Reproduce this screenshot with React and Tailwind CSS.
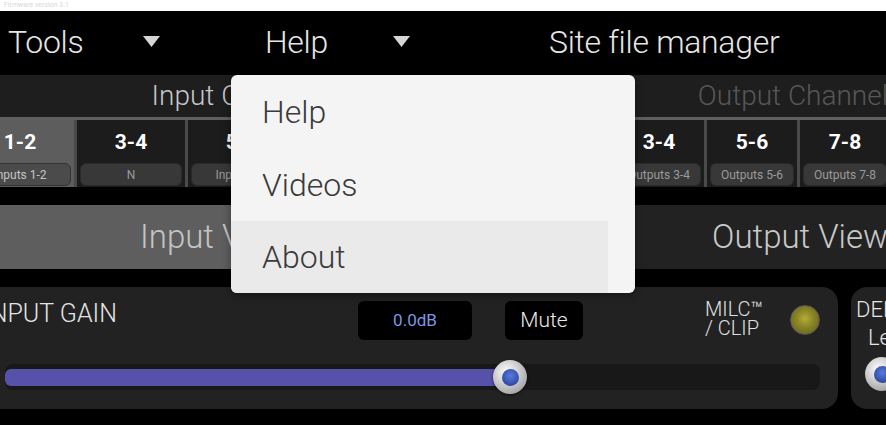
import React from 'react';

const font = { fontFamily: 'Roboto, "Liberation Sans", sans-serif' };

const Caret = () => (
  <svg width="17" height="11" viewBox="0 0 17 11" className="shrink-0">
    <polygon points="0,0 17,0 8.5,11" fill="#d6d6d6" />
  </svg>
);

const inputTabs = [
  { id: '1-2', sub: 'Inputs 1-2', active: true },
  { id: '3-4', sub: 'N' },
  { id: '5-6', sub: 'Inputs 5-6' },
  { id: '7-8', sub: 'Inputs 7-8' },
  { id: '9-10', sub: 'Inputs 9-10' },
];

const outputTabs = [
  { id: '1-2', sub: 'Outputs 1-2' },
  { id: '3-4', sub: 'Outputs 3-4' },
  { id: '5-6', sub: 'Outputs 5-6' },
  { id: '7-8', sub: 'Outputs 7-8' },
  { id: '9-10', sub: 'Outputs 9-10' },
  { id: '11-12', sub: 'Outputs 11-12' },
];

const Tab = ({ tab, width }) => (
  <div
    className={`flex flex-col items-center shrink-0 border-r-[3px] border-[#4a4a4a] px-[3px] pt-[9px] ${
      tab.active ? 'bg-[#5d5d5d]' : 'bg-[#1c1c1c]'
    } ${width}`}
  >
    <span className="text-[21px] leading-[26px] font-bold text-white">{tab.id}</span>
    <span
      className={`mt-[8px] w-full h-[23px] rounded-md border flex items-center justify-center text-[12px] whitespace-nowrap overflow-hidden ${
        tab.active ? 'bg-[#4b4b4b] border-[#333] text-[#c4c4c4]' : 'bg-[#383838] border-[#2a2a2a] text-[#9a9a9a]'
      }`}
    >
      {tab.sub}
    </span>
  </div>
);

export default function App() {
  return (
    <div className="relative w-[886px] h-[425px] overflow-hidden bg-black" style={font}>
      {/* top strip */}
      <div className="h-[11px] bg-white text-[7px] leading-[11px] text-[#d8d8d8] pl-1">
        Firmware version 3.1
      </div>

      {/* nav bar */}
      <div className="h-[64px] flex items-center text-[32px] font-light text-[#e6e6e6] tracking-[-0.3px] pb-[3px]">
        <div className="w-[257px] pl-[8px] flex items-center">
          <span className="w-[135px]">Tools</span>
          <Caret />
        </div>
        <div className="w-[292px] pl-[8px] flex items-center">
          <span className="w-[128px]">Help</span>
          <Caret />
        </div>
        <span>Site file manager</span>
      </div>

      {/* channel selector */}
      <div className="flex ml-[-34px] w-[1200px]">
        <div className="flex flex-col">
          <div className="h-[45px] bg-[#1e1e1e] flex items-center justify-center text-[28px] font-light text-[#c8c8c8] border-b-[3px] border-[#5f5f5f]">
            Input Channels
          </div>
          <div className="flex h-[67px]">
            {inputTabs.map((t) => (
              <Tab key={t.id} tab={t} width="w-[111px]" />
            ))}
          </div>
        </div>
        <div className="flex flex-col">
          <div className="h-[45px] bg-[#1e1e1e] flex items-center justify-center text-[28px] font-light text-[#575757] border-b-[3px] border-[#5f5f5f]">
            Output Channels
          </div>
          <div className="flex h-[67px]">
            {outputTabs.map((t) => (
              <Tab key={t.id} tab={t} width="w-[93px]" />
            ))}
          </div>
        </div>
      </div>

      {/* view toggle */}
      <div className="flex gap-[4px] ml-[-34px] mt-[18px] h-[64px] w-[1200px]">
        <div className="w-[551px] bg-[#5e5e5e] flex items-center pl-[174px] text-[33px] font-light text-[#c4c4c4]">
          Input View
        </div>
        <div className="w-[558px] bg-[#222] flex items-center justify-center text-[33px] font-light text-[#c8c8c8]">
          Output View
        </div>
      </div>

      {/* gain panels */}
      <div className="flex gap-[13px] ml-[-34px] mt-[18px] w-[1200px]">
        <div className="w-[872px] h-[122px] rounded-[16px] bg-[#222] pl-[17px] pr-[18px] pt-[14px]">
          <div className="flex items-start h-[39px]">
            <span className="w-[375px] text-[25px] leading-[26px] font-light text-[#e4e4e4]">INPUT GAIN</span>
            <div className="w-[114px] h-[39px] rounded-md bg-black flex items-center justify-center text-[17px] text-[#7b98e0]">
              0.0dB
            </div>
            <div className="ml-[33px] w-[78px] h-[39px] rounded-md bg-black flex items-center justify-center text-[21px] font-light text-[#eaeaea]">
              Mute
            </div>
            <div className="ml-[122px] w-[72px] text-[20px] leading-[19px] font-light text-[#e0e0e0] -mt-[1px]">
              MILC™
              <br />/ CLIP
            </div>
            <div className="ml-[13px] mt-[4px] w-[30px] h-[30px] rounded-full border border-[#555] bg-[radial-gradient(circle_at_50%_45%,#b5ad35_0%,#8c8626_40%,#5c5a1c_100%)]" />
          </div>
          <div className="relative ml-[22px] mt-[24px] h-[26px] rounded-lg bg-[#181818]">
            <div className="absolute left-0 top-[5px] h-[17px] w-[505px] rounded-l-md bg-[#5651a9]" />
            <div className="absolute left-[488px] top-[-4px] w-[34px] h-[34px] rounded-full bg-[radial-gradient(circle_at_40%_35%,#ffffff_0%,#c9c9c9_45%,#8a8a8a_100%)] flex items-center justify-center shadow-[0_1px_3px_rgba(0,0,0,0.6)]">
              <div className="w-[17px] h-[17px] rounded-full bg-[radial-gradient(circle_at_50%_40%,#5a7ad8_0%,#3553b3_60%,#24367a_100%)]" />
            </div>
          </div>
        </div>
        <div className="w-[200px] h-[122px] rounded-[16px] bg-[#222] pl-[5px] pt-[10px] text-[22px] leading-[26px] font-light text-[#e4e4e4]">
          <div>DELAY</div>
          <div className="pl-[12px] mt-[2px]">Level</div>
          <div className="ml-[9px] mt-[6px] w-[34px] h-[34px] rounded-full bg-[radial-gradient(circle_at_40%_35%,#ffffff_0%,#c9c9c9_45%,#8a8a8a_100%)] flex items-center justify-center">
            <div className="w-[17px] h-[17px] rounded-full bg-[radial-gradient(circle_at_50%_40%,#5a7ad8_0%,#3553b3_60%,#24367a_100%)]" />
          </div>
        </div>
      </div>

      {/* help dropdown */}
      <div className="absolute left-[231px] top-[75px] w-[404px] h-[218px] rounded-md bg-[#f4f4f4] shadow-[0_2px_8px_rgba(0,0,0,0.4)] overflow-hidden text-[32px] font-light text-[#3a3a3a]">
        <div className="h-[73px] flex items-center pl-[31px]">Help</div>
        <div className="h-[73px] flex items-center pl-[31px]">Videos</div>
        <div className="h-[72px] mr-[27px] flex items-center pl-[31px] bg-[#eaeaea]">About</div>
      </div>
    </div>
  );
}
